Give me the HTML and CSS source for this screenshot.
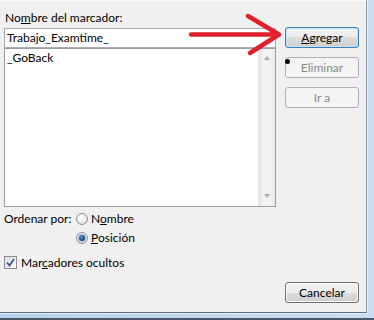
FILE: index.html
```html
<!DOCTYPE html>
<html lang="es">

<head>
    <meta charset="UTF-8">
    <meta name="viewport" content="width=device-width, initial-scale=1.0">
    <title>Marcador</title>
    <link rel="stylesheet" href="styles.css">
</head>

<body>
    <div class="window">
        <div class="dialog">
            <div class="main">
                <label class="caption">No<u>m</u>bre del marcador:</label>
                <div class="name-box">Trabajo_Examtime_</div>
                <div class="list">
                    <div class="items">
                        <div class="item">_GoBack</div>
                    </div>
                    <div class="scrollbar">
                        <span class="arrow up"></span>
                        <span class="arrow down"></span>
                    </div>
                </div>
                <div class="sort">
                    <span class="sort-label">Ordenar por:</span>
                    <div class="options">
                        <label class="option"><span class="radio"></span><span>N<u>o</u>mbre</span></label>
                        <label class="option"><span class="radio checked"></span><span><u>P</u>osición</span></label>
                    </div>
                </div>
                <label class="hidden-marks">
                    <span class="check">
                        <svg width="9" height="9" viewBox="0 0 9 9">
                            <path d="M1 4.5 L3.5 7.5 L8 1" fill="none" stroke="#3A5694" stroke-width="1.8" />
                        </svg>
                    </span>
                    <span>Mar<u>c</u>adores ocultos</span>
                </label>
            </div>
            <div class="side">
                <button type="button" class="btn default"><u>A</u>gregar</button>
                <button type="button" class="btn" disabled>Eliminar</button>
                <button type="button" class="btn" disabled>Ir a</button>
                <button type="button" class="btn cancel">Cancelar</button>
            </div>
        </div>

        <!-- marcas dibujadas encima de la captura -->
        <svg class="red-arrow" viewBox="186 10 98 50">
            <path d="M191 34.5 L277 34.5 M248 16 L279 34.5 L250 53" fill="none" stroke="#E0202A" stroke-width="4.5" stroke-linecap="round" stroke-linejoin="round" />
        </svg>
        <span class="dot"></span>
    </div>
</body>

</html>
```

FILE: styles.css
```css
* {
    box-sizing: border-box;
}

body {
    margin: 0;
    background-color: #F0F0F0;
    color: #000;
    font-family: Lato, "Liberation Sans", sans-serif;
    font-size: 12px;
}

.window {
    position: relative;
    width: 374px;
    height: 320px;
    padding: 0 7px 5px 0;
    background: linear-gradient(90deg, #B9D1EA, #C9DCF0);
    border-bottom: 2px solid #46566B;
}

.dialog {
    height: 100%;
    display: flex;
    padding: 10px 0 9px 4px;
    background-color: #F0F0F0;
    border-top: 1px solid #FAFAFA;
    border-right: 1px solid #8C98A6;
    border-bottom: 1px solid #5D6B7C;
    box-shadow: 1px 1px 0 #E6EEF7;
}

.main {
    width: 272px;
    display: flex;
    flex-direction: column;
}

.caption {
    height: 15px;
    line-height: 15px;
    margin-top: -1px;
    margin-bottom: 3px;
    padding-left: 1px;
}

.name-box {
    height: 20px;
    line-height: 18px;
    padding-left: 2px;
    background-color: #fff;
    border: 1px solid #ABADB3;
    border-left-color: #A2A4AA;
}

.list {
    height: 159px;
    display: flex;
    background-color: #fff;
    border: 1px solid #9A9DA3;
}

.items {
    flex-grow: 1;
    padding: 1px 2px;
}

.item {
    height: 16px;
    line-height: 16px;
}

.scrollbar {
    width: 17px;
    display: flex;
    flex-direction: column;
    justify-content: space-between;
    align-items: center;
    padding: 7px 0 8px;
    background: linear-gradient(90deg, #E6E6E6, #F2F2F2 30%, #F2F2F2 70%, #E8E8E8);
    border-left: 1px solid #E4E4E4;
}

.arrow {
    width: 0;
    height: 0;
    border-left: 3.5px solid transparent;
    border-right: 3.5px solid transparent;
}

.arrow.up {
    border-bottom: 4px solid #A8B0B6;
}

.arrow.down {
    border-top: 4px solid #A8B0B6;
}

.sort {
    display: flex;
    margin-top: 2px;
}

.sort-label {
    width: 72px;
    height: 19px;
    line-height: 19px;
}

.option {
    height: 19px;
    display: flex;
    align-items: center;
    gap: 3px;
}

.radio {
    width: 12px;
    height: 12px;
    border-radius: 50%;
    border: 1px solid #8F9192;
    background: radial-gradient(circle at 40% 35%, #FFFFFF, #E2E2E2 70%, #CFCFCF);
    display: flex;
    align-items: center;
    justify-content: center;
}

.radio.checked::after {
    content: "";
    width: 6px;
    height: 6px;
    border-radius: 50%;
    background: radial-gradient(circle at 40% 35%, #5D8FC9, #1E4B86 60%, #0D2B55);
    box-shadow: 0 0 0 1px #9DC0E4;
}

.hidden-marks {
    height: 19px;
    margin-top: 6px;
    display: flex;
    align-items: center;
    gap: 4px;
}

.check {
    width: 13px;
    height: 13px;
    display: flex;
    align-items: center;
    justify-content: center;
    border: 1px solid #8F8F8F;
    background: linear-gradient(135deg, #DCDEE2, #FBFBFB);
}

.side {
    width: 74px;
    margin-left: 9px;
    padding-top: 16px;
    display: flex;
    flex-direction: column;
    gap: 9px;
}

.btn {
    height: 21px;
    padding: 0;
    font-family: inherit;
    font-size: 12px;
    color: #000;
    border: 1px solid #707070;
    border-radius: 3px;
    background: linear-gradient(#F2F2F2, #EBEBEB 50%, #DDDDDD 50%, #CFCFCF);
    box-shadow: inset 0 0 0 1px #FCFCFC;
}

.btn.default {
    border-color: #3C7FB1;
    box-shadow: inset 0 0 0 1px #BFE2F5;
}

.btn:disabled {
    color: #8A8A8A;
    border-color: #ADB2B5;
    background: #F4F4F4;
    box-shadow: none;
}

.btn.cancel {
    margin-top: auto;
}

.red-arrow {
    position: absolute;
    left: 186px;
    top: 10px;
    width: 98px;
    height: 50px;
}

.dot {
    position: absolute;
    left: 285px;
    top: 59px;
    width: 5px;
    height: 5px;
    border-radius: 50%;
    background-color: #000;
}
```
